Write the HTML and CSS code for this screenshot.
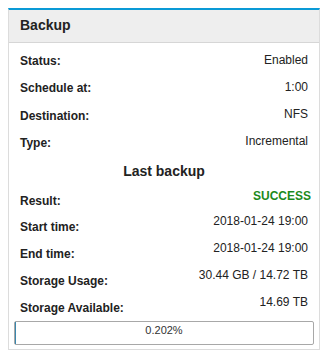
FILE: index.html
```html
<!DOCTYPE html>
<html>
<head>
<meta charset="utf-8">
<link rel="stylesheet" href="styles.css">
</head>
<body>
<div class="panel">
  <div class="panel-heading">Backup</div>
  <div class="panel-body">
    <div class="row"><span class="label">Status:</span><span class="value">Enabled</span></div>
    <div class="row"><span class="label">Schedule at:</span><span class="value">1:00</span></div>
    <div class="row"><span class="label">Destination:</span><span class="value">NFS</span></div>
    <div class="row"><span class="label">Type:</span><span class="value">Incremental</span></div>
    <div class="subhead">Last backup</div>
    <div class="row row-b"><span class="label">Result:</span><span class="value success">SUCCESS</span></div>
    <div class="row row-b"><span class="label">Start time:</span><span class="value">2018-01-24 19:00</span></div>
    <div class="row row-b"><span class="label">End time:</span><span class="value">2018-01-24 19:00</span></div>
    <div class="row row-b"><span class="label">Storage Usage:</span><span class="value">30.44 GB / 14.72 TB</span></div>
    <div class="row row-b row-last"><span class="label">Storage Available:</span><span class="value">14.69 TB</span></div>
    <div class="progress">
      <div class="progress-fill" style="width:0.202%"></div>
      <span class="progress-text">0.202%</span>
    </div>
  </div>
</div>
</body>
</html>
```

FILE: styles.css
```css
* { box-sizing: border-box; }
body {
  margin: 8px;
  background: #fff;
  font-family: "Liberation Sans", Arial, sans-serif;
  color: #222;
}
.panel {
  width: 312px;
  border: 1px solid #dcdcdc;
  border-top: 2px solid #0a9ad6;
}
.panel-heading {
  background: #eeeeee;
  border-bottom: 1px solid #d6d6d6;
  font-size: 14px;
  font-weight: bold;
  line-height: 30px;
  padding: 0 11px 2px;
}
.panel-body {
  padding: 5px 5px 4px;
}
.row {
  display: flex;
  justify-content: space-between;
  align-items: flex-start;
  height: 27.33px;
  padding: 0 6px;
  font-size: 12px;
}
.label {
  font-weight: bold;
  line-height: 27px;
}
.value {
  line-height: 27px;
  margin-top: -1.5px;
}
.subhead {
  text-align: center;
  font-size: 14px;
  font-weight: bold;
  line-height: 28px;
  height: 30.3px;
}
.row-b { height: 26.83px; }
.row-b .value {
  line-height: 14px;
  margin-top: 0;
}
.row-last { height: 25.7px; }
.success {
  color: #1c8a1c;
  font-weight: bold;
  padding-top: 1px;
  margin-right: -3px;
}
.progress {
  position: relative;
  height: 24px;
  border: 1px solid #a8a8a8;
  border-radius: 2px;
  background: #fff;
  text-align: center;
}
.progress-fill {
  height: 100%;
  background: #3a87ad;
}
.progress-text {
  position: absolute;
  left: 0;
  right: 0;
  top: 0;
  font-size: 11px;
  line-height: 17px;
  color: #333;
}
```
